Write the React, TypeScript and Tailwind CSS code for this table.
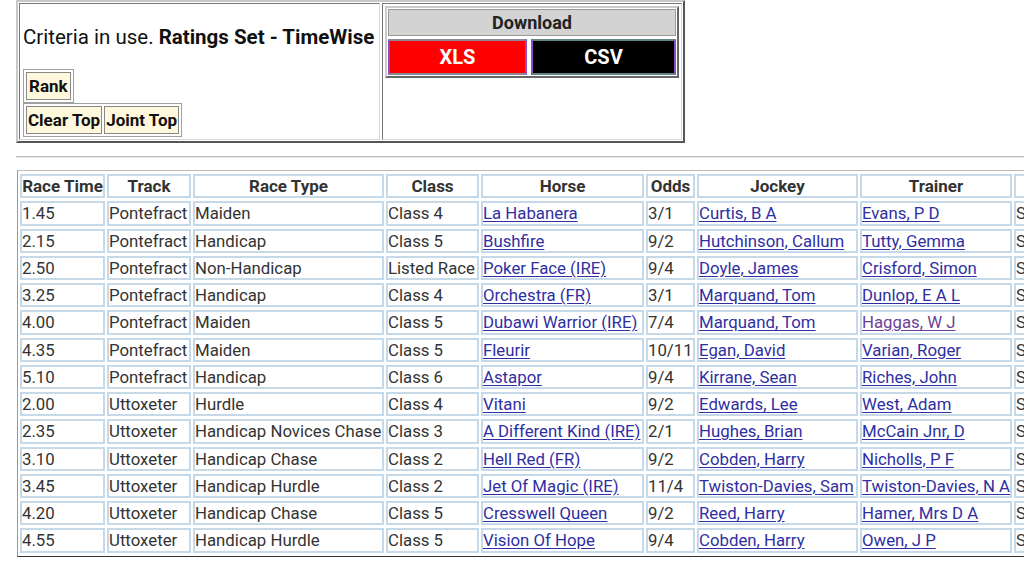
import React from 'react';

type Row = {
  time: string;
  track: string;
  type: string;
  cls: string;
  horse: string;
  odds: string;
  jockey: string;
  trainer: string;
  visited?: boolean;
};

const rows: Row[] = [
  { time: '1.45', track: 'Pontefract', type: 'Maiden', cls: 'Class 4', horse: 'La Habanera', odds: '3/1', jockey: 'Curtis, B A', trainer: 'Evans, P D' },
  { time: '2.15', track: 'Pontefract', type: 'Handicap', cls: 'Class 5', horse: 'Bushfire', odds: '9/2', jockey: 'Hutchinson, Callum', trainer: 'Tutty, Gemma' },
  { time: '2.50', track: 'Pontefract', type: 'Non-Handicap', cls: 'Listed Race', horse: 'Poker Face (IRE)', odds: '9/4', jockey: 'Doyle, James', trainer: 'Crisford, Simon' },
  { time: '3.25', track: 'Pontefract', type: 'Handicap', cls: 'Class 4', horse: 'Orchestra (FR)', odds: '3/1', jockey: 'Marquand, Tom', trainer: 'Dunlop, E A L' },
  { time: '4.00', track: 'Pontefract', type: 'Maiden', cls: 'Class 5', horse: 'Dubawi Warrior (IRE)', odds: '7/4', jockey: 'Marquand, Tom', trainer: 'Haggas, W J', visited: true },
  { time: '4.35', track: 'Pontefract', type: 'Maiden', cls: 'Class 5', horse: 'Fleurir', odds: '10/11', jockey: 'Egan, David', trainer: 'Varian, Roger' },
  { time: '5.10', track: 'Pontefract', type: 'Handicap', cls: 'Class 6', horse: 'Astapor', odds: '9/4', jockey: 'Kirrane, Sean', trainer: 'Riches, John' },
  { time: '2.00', track: 'Uttoxeter', type: 'Hurdle', cls: 'Class 4', horse: 'Vitani', odds: '9/2', jockey: 'Edwards, Lee', trainer: 'West, Adam' },
  { time: '2.35', track: 'Uttoxeter', type: 'Handicap Novices Chase', cls: 'Class 3', horse: 'A Different Kind (IRE)', odds: '2/1', jockey: 'Hughes, Brian', trainer: 'McCain Jnr, D' },
  { time: '3.10', track: 'Uttoxeter', type: 'Handicap Chase', cls: 'Class 2', horse: 'Hell Red (FR)', odds: '9/2', jockey: 'Cobden, Harry', trainer: 'Nicholls, P F' },
  { time: '3.45', track: 'Uttoxeter', type: 'Handicap Hurdle', cls: 'Class 2', horse: 'Jet Of Magic (IRE)', odds: '11/4', jockey: 'Twiston-Davies, Sam', trainer: 'Twiston-Davies, N A' },
  { time: '4.20', track: 'Uttoxeter', type: 'Handicap Chase', cls: 'Class 5', horse: 'Cresswell Queen', odds: '9/2', jockey: 'Reed, Harry', trainer: 'Hamer, Mrs D A' },
  { time: '4.55', track: 'Uttoxeter', type: 'Handicap Hurdle', cls: 'Class 5', horse: 'Vision Of Hope', odds: '9/4', jockey: 'Cobden, Harry', trainer: 'Owen, J P' },
];

const headers = ['Race Time', 'Track', 'Race Type', 'Class', 'Horse', 'Odds', 'Jockey', 'Trainer', 'Show'];
const colWidths = ['w-[85px]', 'w-[84px]', 'w-[191px]', 'w-[93px]', 'w-[163px]', 'w-[49px]', 'w-[161px]', 'w-[152px]', 'w-[90px]'];

const cell = 'border-2 border-[#c5d9e8] h-[24.25px] p-0 whitespace-nowrap overflow-hidden align-middle leading-[18px]';
const link = 'text-[#2f2fa3] underline underline-offset-[2px]';
const btn = 'bg-[#fff8dc] border border-[#888] leading-[26px] font-bold text-[17px] text-[#111]';

const App = () => {
  return (
    <div className="w-[1024px] h-[567px] overflow-hidden bg-white font-['Roboto',sans-serif] text-[#333]">
      {/* Criteria / download box */}
      <div className="ml-[16px] w-[669px] h-[143px] flex gap-[2px] p-[1px] border-2 border-t-[#c8c8c8] border-l-[#c8c8c8] border-r-[#555] border-b-[#555]">
        <div className="w-[361px] flex flex-col items-start pl-[3px] border border-t-[#777] border-l-[#777] border-r-[#d8d8d8] border-b-[#d8d8d8]">
          <div className="mt-[21px] text-[20.5px] leading-[24px] text-[#111] whitespace-nowrap">
            Criteria in use. <b>Ratings Set - TimeWise</b>
          </div>
          <div className="mt-[20px] inline-flex border border-[#a0a0a0] p-[2px]">
            <span className={`${btn} px-[2px]`}>Rank</span>
          </div>
          <div className="inline-flex gap-[2px] border border-[#a0a0a0] p-[2px]">
            <span className={`${btn} px-[1px]`}>Clear Top</span>
            <span className={`${btn} px-[1px]`}>Joint Top</span>
          </div>
        </div>
        <div className="flex-1 p-[2px] border border-t-[#777] border-l-[#777] border-r-[#d8d8d8] border-b-[#d8d8d8]">
          <div className="flex flex-col gap-[3px] p-[1px] border-2 border-t-[#ccc] border-l-[#ccc] border-r-[#666] border-b-[#666]">
            <div className="bg-[#d3d3d3] border border-[#999] text-center font-bold text-[18px] leading-[25px] text-[#222]">Download</div>
            <div className="grid grid-cols-[139px_1fr] gap-[4px]">
              <div className="bg-[#ff0000] border-2 border-y-[#8a8a96] border-x-[#8a4ec0] text-center text-white font-bold text-[20px] leading-[32px]">XLS</div>
              <div className="bg-black border-2 border-y-[#5f8585] border-x-[#8a4ec0] text-center text-white font-bold text-[20px] leading-[32px]">CSV</div>
            </div>
          </div>
        </div>
      </div>

      {/* rule */}
      <div className="mt-[13px] ml-[16px] h-[2px] border-t border-t-[#bdbdbd] border-b border-b-[#e6e6e6]" />

      {/* Results table */}
      <table className="mt-[12px] ml-[17px] w-[1090px] table-fixed border-separate border-spacing-x-[2px] border-spacing-y-[3px] border border-t-[#bbb] border-l-[#999] border-r-[#333] border-b-[#333] text-[16.8px]">
        <colgroup>
          {colWidths.map((w, i) => (
            <col key={i} className={w} />
          ))}
        </colgroup>
        <thead>
          <tr>
            {headers.map((h, i) => (
              <th key={i} className={`${cell} font-bold text-center text-[17px] text-[#333] leading-[17px]`}>
                {i === headers.length - 1 ? '' : h}
              </th>
            ))}
          </tr>
        </thead>
        <tbody>
          {rows.map((r, i) => (
            <tr key={i}>
              <td className={cell}>{r.time}</td>
              <td className={cell}>{r.track}</td>
              <td className={cell}>{r.type}</td>
              <td className={cell}>{r.cls}</td>
              <td className={cell}><a href="#" className={link}>{r.horse}</a></td>
              <td className={cell}>{r.odds}</td>
              <td className={cell}><a href="#" className={link}>{r.jockey}</a></td>
              <td className={cell}>
                <a href="#" className={r.visited ? 'text-[#6b3f98] underline underline-offset-[2px]' : link}>{r.trainer}</a>
              </td>
              <td className={cell}>Show</td>
            </tr>
          ))}
        </tbody>
      </table>
    </div>
  );
};

export default App;
